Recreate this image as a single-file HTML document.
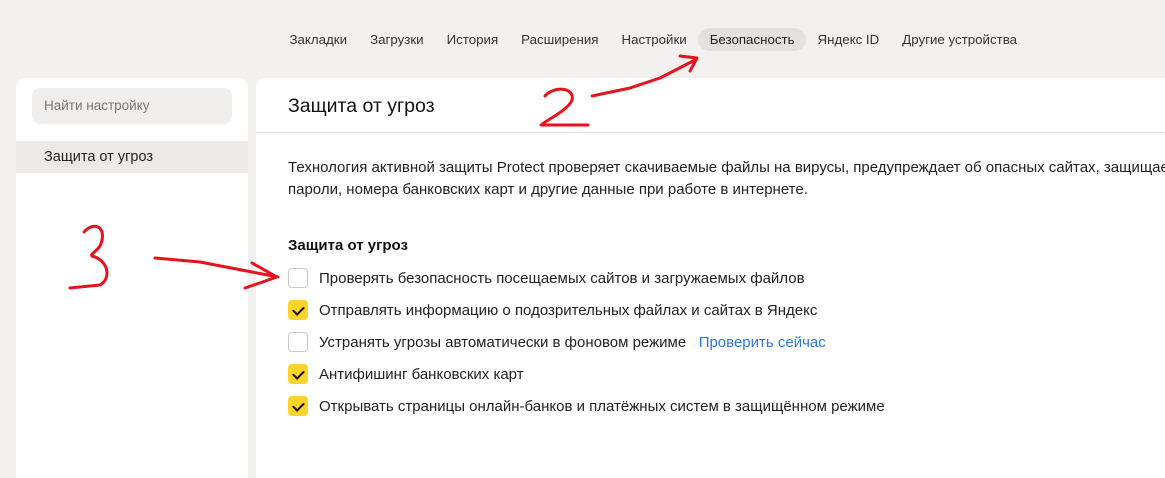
<!DOCTYPE html>
<html><head><meta charset="utf-8"><style>
*{margin:0;padding:0;box-sizing:border-box}
body{width:1165px;height:460px;overflow:hidden;background:#f2f1ef;font-family:"Liberation Sans","DejaVu Sans",sans-serif;color:#222;position:relative}
.nav{position:absolute;top:28px;left:278px;display:flex;font-size:13.3px;color:#333}
.nav span{padding:0 11.5px;height:23px;line-height:23px}
.nav .act{background:#e3e2e0;border-radius:12px;color:#222}
.left{position:absolute;left:16px;top:78px;width:232px;height:400px;background:#fff;border-radius:10px 10px 0 0}
.search{position:absolute;left:16px;top:10px;width:200px;height:36px;background:#f0efee;border-radius:8px;font-size:13.5px;color:#777;line-height:36px;padding-left:12px}
.item{position:absolute;left:0;top:63px;width:232px;height:32px;background:#ebeae8;font-size:14.5px;line-height:32px;padding-left:28px;color:#222}
.main{position:absolute;left:256px;top:78px;width:920px;height:400px;background:#fff;border-radius:10px 0 0 0}
h1{position:absolute;left:32px;top:17px;font-size:19.5px;font-weight:normal;color:#111}
.hr{position:absolute;left:0;top:54px;width:100%;height:1px;background:#e3e2e0}
.desc{position:absolute;left:32px;top:79px;font-size:15px;line-height:22px;white-space:nowrap;color:#222}
h2{position:absolute;left:32px;top:159px;font-size:15px;font-weight:bold;color:#111}
.row{position:absolute;left:32px;height:20px;font-size:15px;line-height:20px;white-space:nowrap;color:#222}
.cb{position:absolute;left:0;top:0;width:20px;height:20px;border:1px solid #c8c8c8;border-radius:4px;background:#fff}
.cb.on{background:#fed42b;border-color:#fed42b}
.cb.on:after{content:"";position:absolute;left:6px;top:3px;width:5px;height:9px;border:solid #111;border-width:0 2px 2px 0;transform:rotate(45deg)}
.row .t{position:absolute;left:31px;top:1px}
a{color:#2a79d8;text-decoration:none}
svg{position:absolute;left:0;top:0}
</style></head><body>
<div class="nav"><span>Закладки</span><span>Загрузки</span><span>История</span><span>Расширения</span><span>Настройки</span><span class="act">Безопасность</span><span>Яндекс ID</span><span>Другие устройства</span></div>
<div class="left"><div class="search">Найти настройку</div><div class="item">Защита от угроз</div></div>
<div class="main">
<h1>Защита от угроз</h1><div class="hr"></div>
<div class="desc">Технология активной защиты Protect проверяет скачиваемые файлы на вирусы, предупреждает об опасных сайтах, защищает<br>пароли, номера банковских карт и другие данные при работе в интернете.</div>
<h2>Защита от угроз</h2>
<div class="row" style="top:190px"><div class="cb"></div><span class="t">Проверять безопасность посещаемых сайтов и загружаемых файлов</span></div>
<div class="row" style="top:222px"><div class="cb on"></div><span class="t">Отправлять информацию о подозрительных файлах и сайтах в Яндекс</span></div>
<div class="row" style="top:254px"><div class="cb"></div><span class="t">Устранять угрозы автоматически в фоновом режиме&nbsp;&nbsp; <a>Проверить сейчас</a></span></div>
<div class="row" style="top:286px"><div class="cb on"></div><span class="t">Антифишинг банковских карт</span></div>
<div class="row" style="top:318px"><div class="cb on"></div><span class="t">Открывать страницы онлайн-банков и платёжных систем в защищённом режиме</span></div>
</div>
<svg width="1165" height="460" fill="none" stroke="#e8121c" stroke-width="3" stroke-linecap="round" stroke-linejoin="round">
<path d="M545 96 C555 85,575 88,572 100 C568 110,550 118,541 125 L588 125"/>
<path d="M592 96 L630 88 L660 78 L695 60"/>
<path d="M680 56 L697 58 L690 71"/>
<path d="M84 232 C95 220,108 228,100 246 C96 252,90 254,92 256 C108 260,112 278,100 285 L70 288"/>
<path d="M155 258 L200 262 L278 277"/>
<path d="M252 263 L277 277 L245 288"/>
</svg>
</body></html>
